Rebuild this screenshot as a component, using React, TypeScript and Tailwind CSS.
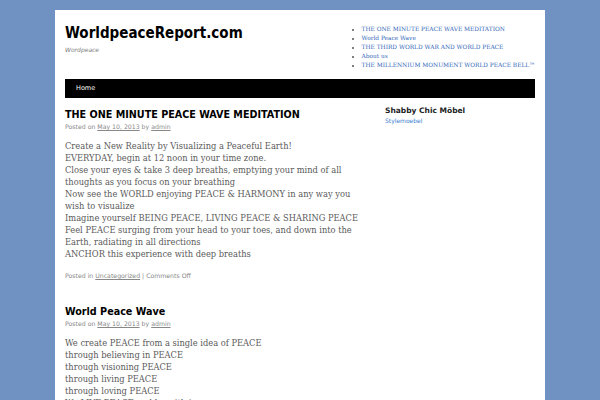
const menu = [
  "THE ONE MINUTE PEACE WAVE MEDITATION",
  "World Peace Wave",
  "THE THIRD WORLD WAR AND WORLD PEACE",
  "About us",
  "THE MILLENNIUM MONUMENT WORLD PEACE BELL™",
];

const post1 = [
  "Create a New Reality by Visualizing a Peaceful Earth!",
  "EVERYDAY, begin at 12 noon in your time zone.",
  "Close your eyes & take 3 deep breaths, emptying your mind of all thoughts as you focus on your breathing",
  "Now see the WORLD enjoying PEACE & HARMONY in any way you wish to visualize",
  "Imagine yourself BEING PEACE, LIVING PEACE & SHARING PEACE",
  "Feel PEACE surging from your head to your toes, and down into the Earth, radiating in all directions",
  "ANCHOR this experience with deep breaths",
];

const post2 = [
  "We create PEACE from a single idea of PEACE",
  "through believing in PEACE",
  "through visioning PEACE",
  "through living PEACE",
  "through loving PEACE",
  "We LIVE PEACE and be with joy",
];

const sans = "font-['DejaVu_Sans',sans-serif]";
const cond = "font-['DejaVu_Sans_Condensed','DejaVu_Sans',sans-serif]";
const slab = "font-['DejaVu_Serif',serif]";

const Meta = () => (
  <div className={`${sans} text-[6.2px] leading-[10px] text-[#888]`}>
    Posted on <span className="underline">May 10, 2013</span> by{" "}
    <span className="underline">admin</span>
  </div>
);

export default function App() {
  return (
    <div className="min-h-[400px] w-[600px] overflow-hidden bg-[#6f92c2] pt-[10px]">
      <div className="mx-auto h-[390px] w-[490px] overflow-hidden bg-white px-[10px]">
        <header className="flex h-[69px] justify-between">
          <div className="pt-[14px]">
            <h1 className={`${cond} text-[15px] font-bold leading-[18px] text-black`}>
              WorldpeaceReport.com
            </h1>
            <div className={`${sans} mt-[4px] text-[6px] leading-[8px] italic text-[#777]`}>
              Wordpeace
            </div>
          </div>
          <ul className={`${slab} mt-[14.5px] list-disc pl-[7px] text-[5.85px] leading-[9px] text-[#3468b8] marker:text-[#555]`}>
            {menu.map((m) => (
              <li key={m}>{m}</li>
            ))}
          </ul>
        </header>
        <nav className="flex h-[19px] items-center bg-black pl-[11px]">
          <span className={`${sans} text-[6.5px] text-white`}>Home</span>
        </nav>
        <div className="flex">
          <main className="w-[300px] pt-[10px]">
            <h2 className={`${cond} text-[10.7px] font-bold leading-[14px] text-black`}>
              THE ONE MINUTE PEACE WAVE MEDITATION
            </h2>
            <Meta />
            <div className={`${slab} mt-[8px] text-[8.3px] leading-[12px] text-[#5a5a5a]`}>
              {post1.map((l) => (
                <div key={l}>{l}</div>
              ))}
            </div>
            <div className={`${sans} mt-[11px] text-[6.2px] leading-[10px] text-[#888]`}>
              Posted in <span className="underline">Uncategorized</span> | Comments Off
            </div>
            <h2 className={`${cond} mt-[24px] text-[10.7px] font-bold leading-[14px] text-black`}>
              World Peace Wave
            </h2>
            <Meta />
            <div className={`${slab} mt-[8px] text-[8.3px] leading-[12px] text-[#5a5a5a]`}>
              {post2.map((l) => (
                <div key={l}>{l}</div>
              ))}
            </div>
          </main>
          <aside className="ml-[20px] pt-[8px]">
            <div className={`${sans} text-[7.5px] font-bold leading-[10px] text-[#222]`}>
              Shabby Chic Möbel
            </div>
            <div className={`${sans} text-[6px] leading-[10px] text-[#3a80d0]`}>Stylemoebel</div>
          </aside>
        </div>
      </div>
    </div>
  );
}
